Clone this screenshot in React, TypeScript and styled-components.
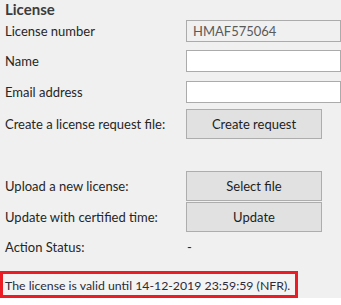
import styled, { createGlobalStyle } from 'styled-components'

const GlobalStyle = createGlobalStyle`
  html, body {
    margin: 0;
    padding: 0;
    background: #ffffff;
  }
  body {
    font-family: Lato, 'Noto Sans', sans-serif;
    font-size: 13px;
    color: #262626;
  }
`

type RowProps = {
  $top?: number
  $height: number
}

const Panel = styled.div`
  width: 341px;
  height: 298px;
  background: #f0f0f0;
  padding-left: 5px;
  box-sizing: border-box;
  display: flex;
  flex-direction: column;
`

const Title = styled.div`
  height: 22px;
  display: flex;
  align-items: center;
  font-size: 15px;
  font-weight: 700;
  color: #3c3c3c;
  padding-bottom: 2px;
  box-sizing: border-box;
`

const Row = styled.div<RowProps>`
  display: grid;
  grid-template-columns: 181px 155px;
  align-items: center;
  margin-top: ${(p) => p.$top ?? 0}px;
  height: ${(p) => p.$height}px;
`

const Label = styled.div`
  color: #262626;
  white-space: nowrap;
`

const Input = styled.input<{ $readOnly?: boolean }>`
  box-sizing: border-box;
  width: 155px;
  height: 22px;
  margin: 0;
  padding: 0 6px;
  border: 1px solid #ababab;
  background: ${(p) => (p.$readOnly ? '#f0f0f0' : '#ffffff')};
  color: #5a5a5a;
  font-family: Lato, 'Noto Sans', sans-serif;
  font-size: 13px;
  outline: none;
`

const Button = styled.button`
  box-sizing: border-box;
  width: 136px;
  height: 30px;
  margin: 0;
  padding: 0;
  border: 1px solid #adadad;
  background: #e1e1e1;
  color: #1e1e1e;
  font-family: Lato, 'Noto Sans', sans-serif;
  font-size: 13px;
`

const Status = styled.div`
  padding-left: 1px;
`

const Notice = styled.div`
  margin-top: 14px;
  margin-left: -5px;
  width: 298px;
  height: 30px;
  box-sizing: border-box;
  border: 3px solid #ec1c24;
  display: flex;
  align-items: center;
  padding-left: 2px;
  padding-top: 2px;
  background: #f3f3f3;
  color: #2b2b3c;
  font-size: 12.3px;
  white-space: nowrap;
`

export default function App() {
  return (
    <>
      <GlobalStyle />
      <Panel>
        <Title>License</Title>
        <Row $height={22}>
          <Label>License number</Label>
          <Input $readOnly readOnly value="HMAF575064" />
        </Row>
        <Row $top={8} $height={22}>
          <Label>Name</Label>
          <Input />
        </Row>
        <Row $top={9} $height={22}>
          <Label>Email address</Label>
          <Input />
        </Row>
        <Row $top={6} $height={30}>
          <Label>Create a license request file:</Label>
          <Button>Create request</Button>
        </Row>
        <Row $top={32} $height={30}>
          <Label>Upload a new license:</Label>
          <Button>Select file</Button>
        </Row>
        <Row $top={1} $height={30}>
          <Label>Update with certified time:</Label>
          <Button>Update</Button>
        </Row>
        <Row $top={5} $height={22}>
          <Label>Action Status:</Label>
          <Status>-</Status>
        </Row>
        <Notice>The license is valid until 14-12-2019 23:59:59 (NFR).</Notice>
      </Panel>
    </>
  )
}
